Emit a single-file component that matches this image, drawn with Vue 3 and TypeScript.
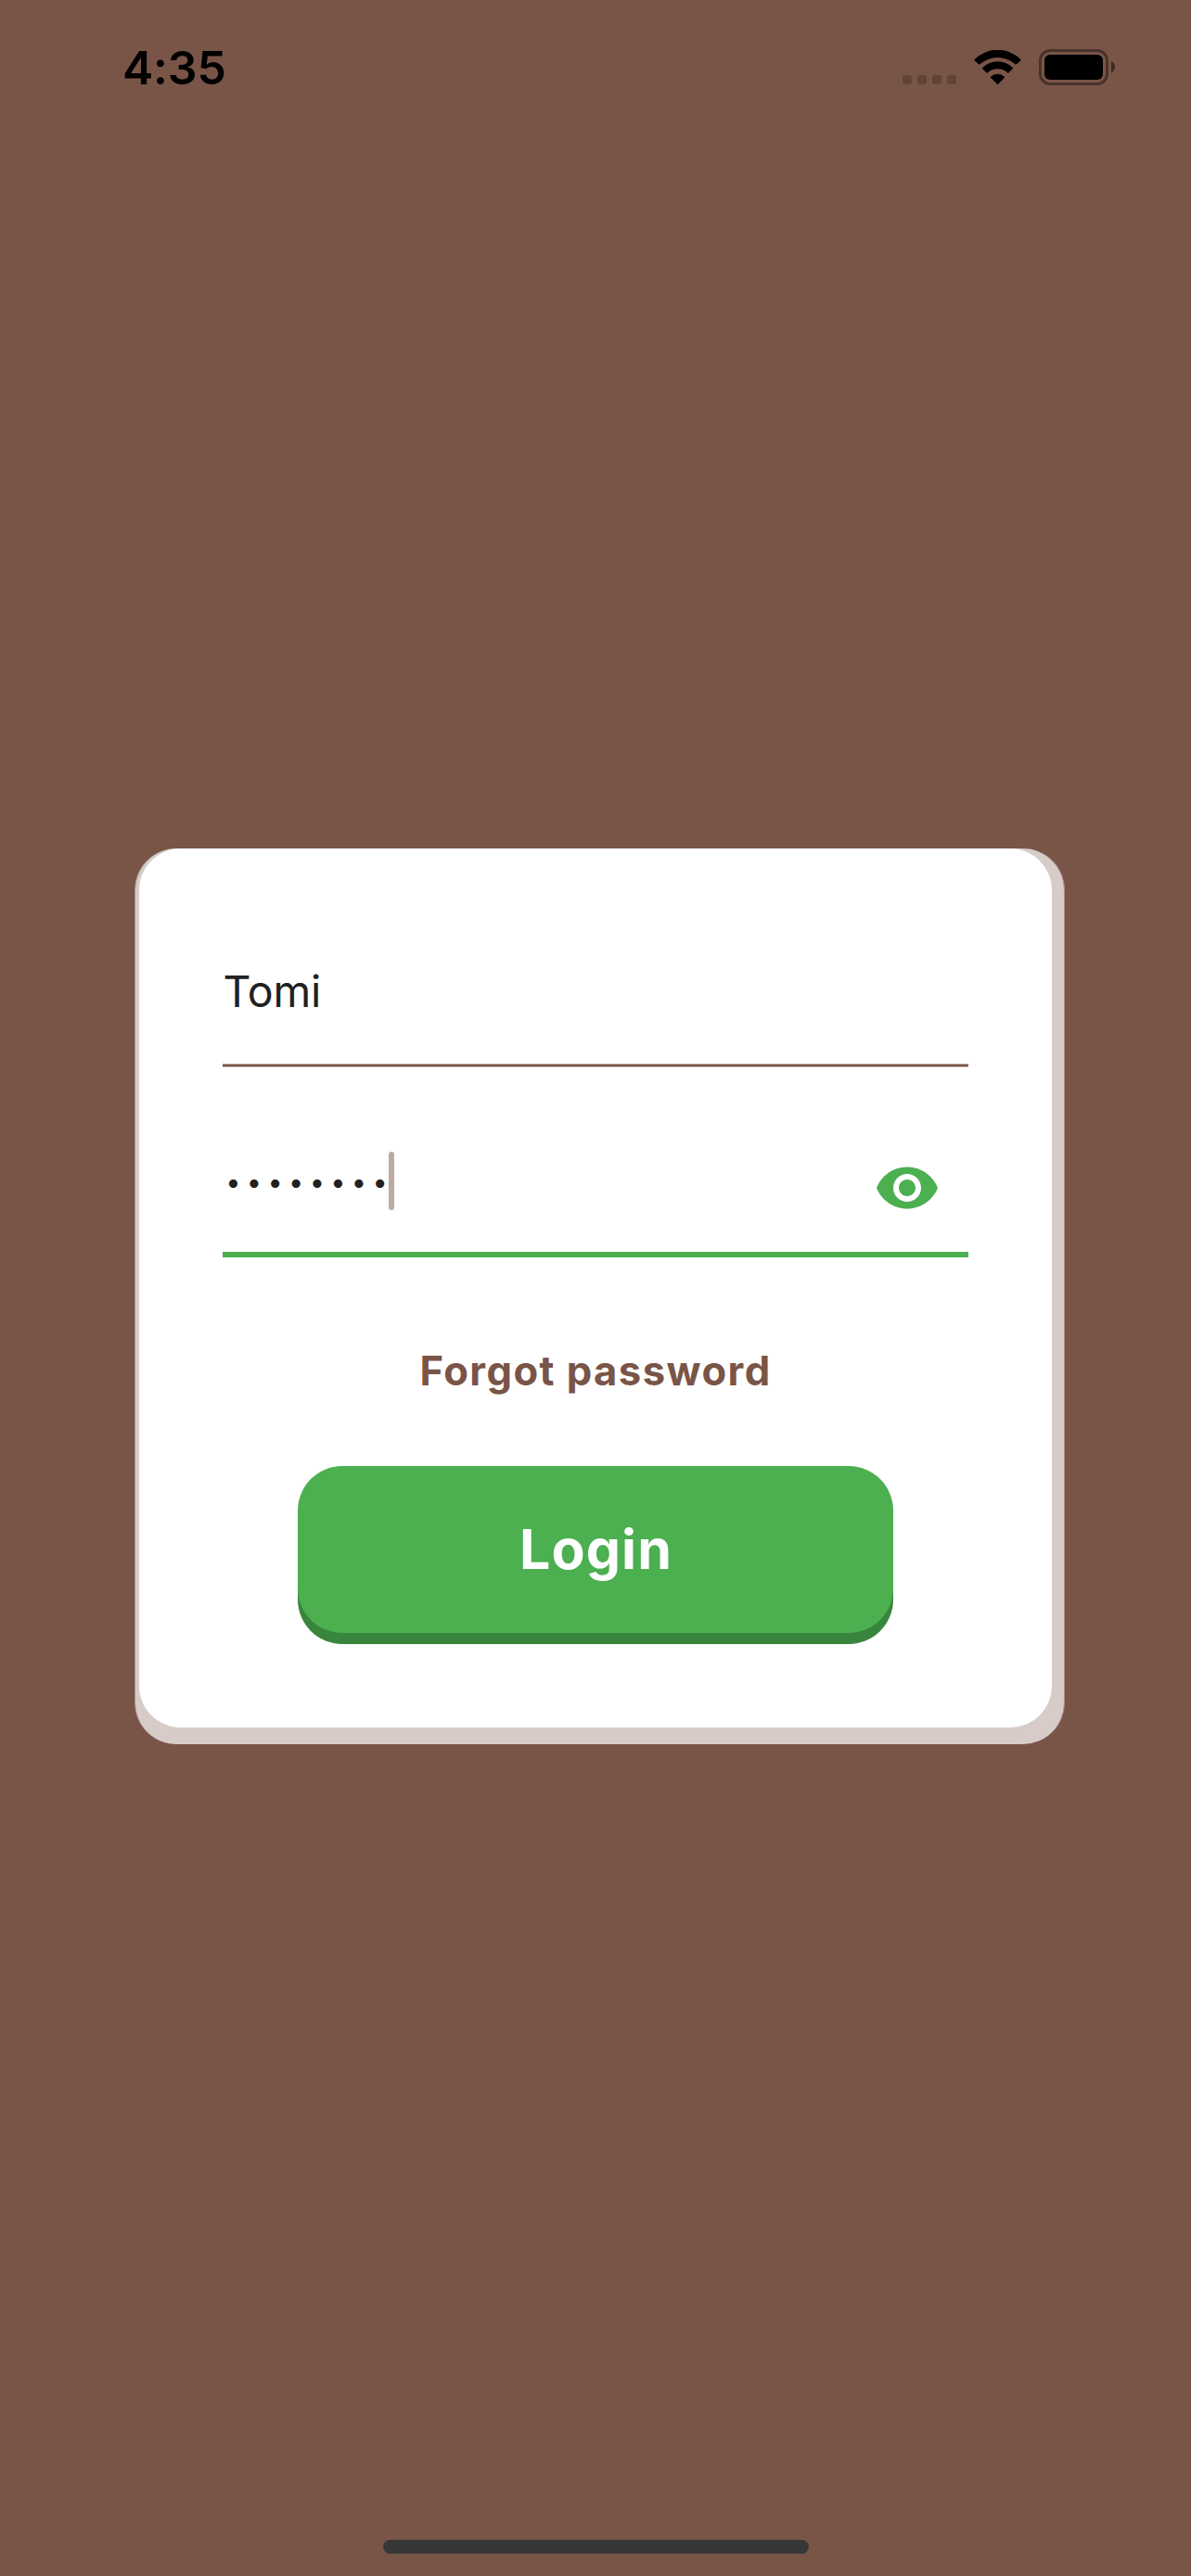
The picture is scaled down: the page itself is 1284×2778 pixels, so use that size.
<script setup lang="ts">
import { ref } from 'vue'

const time = ref('4:35')
const username = ref('Tomi')
const password = ref('••••••••')
</script>

<template>
  <main class="screen">
    <header class="status">
      <span class="time">{{ time }}</span>
      <div class="indicators">
        <svg class="signal" width="58" height="10" viewBox="0 0 58 10">
          <rect v-for="i in 4" :key="i" :x="(i - 1) * 16" width="10" height="10" rx="3" />
        </svg>
        <svg class="wifi" width="51" height="38" viewBox="0 0 51 38">
          <path d="M.6 9.9A35.7 35.7 0 0 1 50.4 9.9Q51 10.5 50.5 11.1L45.7 15.4Q45.2 15.8 44.6 15.3A29 29 0 0 0 6.4 15.3Q5.8 15.8 5.3 15.4L.5 11.1Q0 10.5 .6 9.9Z" />
          <path d="M9.2 19.1A22.8 22.8 0 0 1 41.8 19.1Q42.4 19.7 41.8 20.3L37.4 24.6Q36.8 25 36.2 24.5A15.7 15.7 0 0 0 14.8 24.5Q14.2 25 13.6 24.6L9.2 20.3Q8.6 19.7 9.2 19.1Z" />
          <path d="M18 28.7A11 11 0 0 1 33 28.7Q33.4 29.2 33 29.7L26.1 36.7Q25.5 37.2 24.9 36.7L18 29.7Q17.6 29.2 18 28.7Z" />
        </svg>
        <svg class="battery" width="82" height="39" viewBox="0 0 82 39">
          <rect x="1.5" y="1.5" width="72" height="36" rx="10.5" fill="none" stroke="#000" stroke-opacity=".4" stroke-width="3" />
          <rect x="6" y="6" width="63" height="27" rx="6" />
          <path d="M78 13.2Q82 15 82 19.3T78 25.4Z" fill-opacity=".5" />
        </svg>
      </div>
    </header>

    <div class="card-base">
      <form class="card" @submit.prevent>
        <div class="name">{{ username }}</div>
        <div class="rule"></div>
        <div class="password">
          <span class="dots">{{ password }}</span>
          <span class="caret"></span>
          <svg class="eye" width="72" height="72" viewBox="0 0 24 24">
            <path d="M12 4.5C7 4.5 2.73 7.61 1 12c1.73 4.39 6 7.5 11 7.5s9.27-3.11 11-7.5c-1.73-4.39-6-7.5-11-7.5zM12 17c-2.76 0-5-2.24-5-5s2.24-5 5-5 5 2.24 5 5-2.24 5-5 5zm0-8c-1.66 0-3 1.34-3 3s1.34 3 3 3 3-1.34 3-3-1.34-3-3-3z" />
          </svg>
        </div>
        <div class="rule active"></div>
        <a class="forgot">Forgot password</a>
        <button class="login" type="submit">Login</button>
      </form>
    </div>

    <div class="home"></div>
  </main>
</template>

<style>
body {
  margin: 0;
  background: #795548;
}
</style>

<style scoped>
.screen {
  display: flex;
  flex-direction: column;
  align-items: center;
  box-sizing: border-box;
  width: 1284px;
  height: 2778px;
  padding-bottom: 24px;
  overflow: hidden;
  background: #795548;
  font-family: Inter, "Liberation Sans", sans-serif;
}
.status {
  display: flex;
  justify-content: space-between;
  box-sizing: border-box;
  width: 100%;
  height: 146px;
  padding: 0 82px 0 132px;
  color: #000;
}
.time {
  font-size: 50px;
  font-weight: 600;
  letter-spacing: -0.2px;
  line-height: 146px;
}
.indicators {
  display: flex;
  align-items: flex-start;
}
.signal {
  margin: 81px 19px 0 0;
  fill-opacity: 0.2;
}
.wifi {
  margin: 54px 19px 0 0;
}
.battery {
  margin-top: 53px;
}
.card-base {
  box-sizing: border-box;
  width: 1003px;
  margin: 769px 0 0 9px;
  padding: 0 13px 18px 4px;
  border: solid #a89088;
  border-width: 0 1px;
  border-radius: 45px;
  background: #d7ccc8;
}
.card {
  display: flex;
  flex-direction: column;
  box-sizing: border-box;
  width: 984px;
  height: 948px;
  padding: 124px 90px 102px;
  border-radius: 45px;
  background: #fff;
}
.name {
  height: 60px;
  padding-left: 0.6px;
  color: #212121;
  font-size: 46.5px;
  letter-spacing: -0.2px;
  line-height: 60px;
}
.rule {
  box-sizing: border-box;
  height: 4px;
  margin-top: 48px;
  border: solid #bcaaa3;
  border-width: 1px 0;
  background: #795548;
}
.rule.active {
  height: 6px;
  margin-top: 45px;
  border: 0;
  background: #4caf50;
}
.password {
  display: flex;
  align-items: flex-start;
  height: 63px;
  margin-top: 91px;
}
.dots {
  padding-left: 3.2px;
  color: #212121;
  font-size: 29px;
  letter-spacing: 6.3px;
  line-height: 66px;
}
.caret {
  width: 6px;
  height: 63px;
  margin-left: -5.2px;
  border-radius: 3px;
  background: #bcaaa4;
}
.eye {
  margin: 3px 30px 0 auto;
  fill: #4caf50;
}
.forgot {
  margin-top: 93px;
  color: #795548;
  font-size: 43.6px;
  font-weight: 700;
  letter-spacing: 1.43px;
  line-height: 60px;
  text-align: center;
}
.login {
  align-self: center;
  width: 642px;
  height: 180px;
  margin-top: 72px;
  padding: 0 0 0 1px;
  border: 0;
  border-radius: 48px;
  background: #4caf50;
  box-shadow: 0 12px #39853d;
  color: #fff;
  font-family: inherit;
  font-size: 59px;
  font-weight: 700;
  letter-spacing: 1.1px;
  line-height: 180px;
}
.home {
  width: 459px;
  height: 15px;
  margin: auto 0 0 1px;
  border-radius: 7.5px;
  background: #373737;
}
</style>
